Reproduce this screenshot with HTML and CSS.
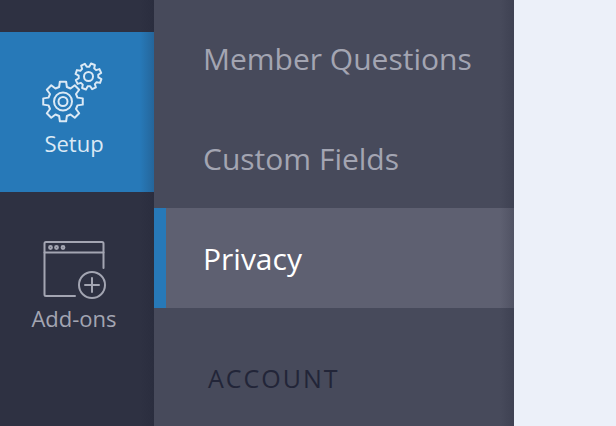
FILE: index.html
```html
<!DOCTYPE html>
<html lang="en">
<head>
    <meta charset="UTF-8">
    <meta name="viewport" content="width=device-width, initial-scale=1.0">
    <title>Settings</title>
    <link rel="stylesheet" href="styles.css">
</head>
<body>
    <div class="app">
        <nav class="rail">
            <a class="rail-item active" href="#">
                <svg class="rail-icon" width="64" height="64" viewBox="0 0 64 64" fill="none" stroke="currentColor" stroke-width="2" stroke-linejoin="round">
                    <path id="gear" transform="translate(21 41.5)" d="M-3.13 -19.75 L3.13 -19.75 L3.88 -14.49 L7.5 -12.99 L11.76 -16.18 L16.18 -11.76 L12.99 -7.5 L14.49 -3.88 L19.75 -3.13 L19.75 3.13 L14.49 3.88 L12.99 7.5 L16.18 11.76 L11.76 16.18 L7.5 12.99 L3.88 14.49 L3.13 19.75 L-3.13 19.75 L-3.88 14.49 L-7.5 12.99 L-11.76 16.18 L-16.18 11.76 L-12.99 7.5 L-14.49 3.88 L-19.75 3.13 L-19.75 -3.13 L-14.49 -3.88 L-12.99 -7.5 L-16.18 -11.76 L-11.76 -16.18 L-7.5 -12.99 L-3.88 -14.49 Z"/>
                    <circle cx="21" cy="41.5" r="9"/>
                    <circle cx="21" cy="41.5" r="4.5"/>
                    <path transform="translate(46.5 16.5) rotate(20) scale(.66)" stroke-width="3" d="M-3.13 -19.75 L3.13 -19.75 L3.88 -14.49 L7.5 -12.99 L11.76 -16.18 L16.18 -11.76 L12.99 -7.5 L14.49 -3.88 L19.75 -3.13 L19.75 3.13 L14.49 3.88 L12.99 7.5 L16.18 11.76 L11.76 16.18 L7.5 12.99 L3.88 14.49 L3.13 19.75 L-3.13 19.75 L-3.88 14.49 L-7.5 12.99 L-11.76 16.18 L-16.18 11.76 L-12.99 7.5 L-14.49 3.88 L-19.75 3.13 L-19.75 -3.13 L-14.49 -3.88 L-12.99 -7.5 L-16.18 -11.76 L-11.76 -16.18 L-7.5 -12.99 L-3.88 -14.49 Z"/>
                    <circle cx="46.5" cy="16.5" r="4.5"/>
                </svg>
                <span>Setup</span>
            </a>
            <a class="rail-item" href="#">
                <svg class="rail-icon" width="64" height="58" viewBox="0 0 64 58" fill="none" stroke="currentColor" stroke-width="2" stroke-linecap="round" stroke-linejoin="round">
                    <path d="M33 55 H4 Q2.500 55 2.500 53.500 V2.500 Q2.500 1 4 1 H60 Q61.500 1 61.500 2.500 V27"/>
                    <path d="M2.500 11.500 H61.500"/>
                    <circle cx="8.500" cy="6.500" r="1.400"/>
                    <circle cx="14.500" cy="6.500" r="1.400"/>
                    <circle cx="21" cy="6.500" r="1.400"/>
                    <circle cx="50" cy="44" r="13"/>
                    <path d="M50 37 V51 M43 44 H57"/>
                </svg>
                <span>Add-ons</span>
            </a>
        </nav>

        <div class="panel">
            <a class="panel-item" href="#">Member Questions</a>
            <a class="panel-item" href="#">Custom Fields</a>
            <a class="panel-item active" href="#">Privacy</a>
            <h2 class="panel-heading">ACCOUNT</h2>
        </div>

        <main class="content"></main>
    </div>
</body>
</html>
```

FILE: styles.css
```css
* {
    margin: 0;
    padding: 0;
    box-sizing: border-box;
    font-family: 'Open Sans', 'Noto Sans', sans-serif;
}

body {
    background: #ecf0f9;
    overflow: hidden;
}

a {
    text-decoration: none;
}

.app {
    display: flex;
    height: 426px;
}

.rail {
    position: relative;
    width: 154px;
    padding: 32px 6px 0 0;
    background: #2e3142;
}

/* soft edge on the right side, goes over the blue item too */
.rail::after,
.panel::after {
    content: '';
    position: absolute;
    top: 0;
    right: 0;
    bottom: 0;
    width: 14px;
    background: linear-gradient(to right, rgba(30, 33, 50, 0), rgba(30, 33, 50, 0.22));
}

.rail-item {
    display: flex;
    flex-direction: column;
    align-items: center;
    height: 160px;
    margin-right: -6px;
    padding: 28px 6px 0 0;
    color: #a3a5b2;
    font-size: 22px;
    line-height: 30px;
}

.rail-item.active {
    background: #2779b8;
    color: #dbe9f5;
}

.rail-item + .rail-item {
    padding-top: 49px;
}

.rail-icon {
    display: block;
    margin-bottom: 4px;
}

.panel {
    position: relative;
    width: 360px;
    padding-top: 8px;
    background: #474a5b;
}

.panel-item {
    display: flex;
    align-items: center;
    height: 100px;
    padding-left: 49px;
    color: #a3a5b2;
    font-size: 30px;
}

.panel-item.active {
    padding-left: 37px;
    border-left: 12px solid #2779b8;
    background: #5e6071;
    color: #fff;
}

.panel-heading {
    margin-top: 52px;
    padding-left: 54px;
    color: #222538;
    font-size: 25px;
    font-weight: 400;
    line-height: 36px;
    letter-spacing: 2px;
}

.content {
    flex: 1;
    background: #ecf0f9;
}
```
